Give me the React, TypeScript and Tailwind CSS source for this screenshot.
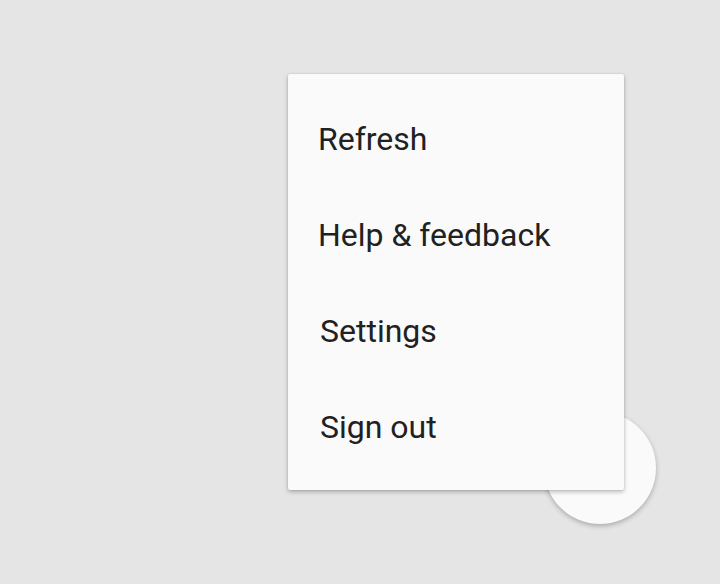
export default function App() {
  const items = [
    { label: "Refresh", pad: "pl-[30px]" },
    { label: "Help & feedback", pad: "pl-[30px]" },
    { label: "Settings", pad: "pl-8" },
    { label: "Sign out", pad: "pl-8" },
  ];

  return (
    <div className="relative h-[584px] w-[720px] overflow-hidden bg-[#e5e5e5] font-['Roboto',sans-serif]">
      {/* floating button behind the menu */}
      <div className="absolute left-[544px] top-[412px] h-[112px] w-[112px] rounded-full bg-[#fafafa] shadow-[0_2px_5px_rgba(0,0,0,0.26)]" />

      <div className="absolute left-[288px] top-[74px] w-[336px] rounded-[2px] bg-[#fafafa] pt-[17px] pb-[15px] shadow-[0_2px_4px_rgba(0,0,0,0.25),0_0_2px_rgba(0,0,0,0.12)]">
        {items.map((item) => (
          <div
            key={item.label}
            className={`flex h-[96px] items-center pr-8 ${item.pad} text-[32px] leading-none text-[#212121]`}
          >
            {item.label}
          </div>
        ))}
      </div>
    </div>
  );
}
